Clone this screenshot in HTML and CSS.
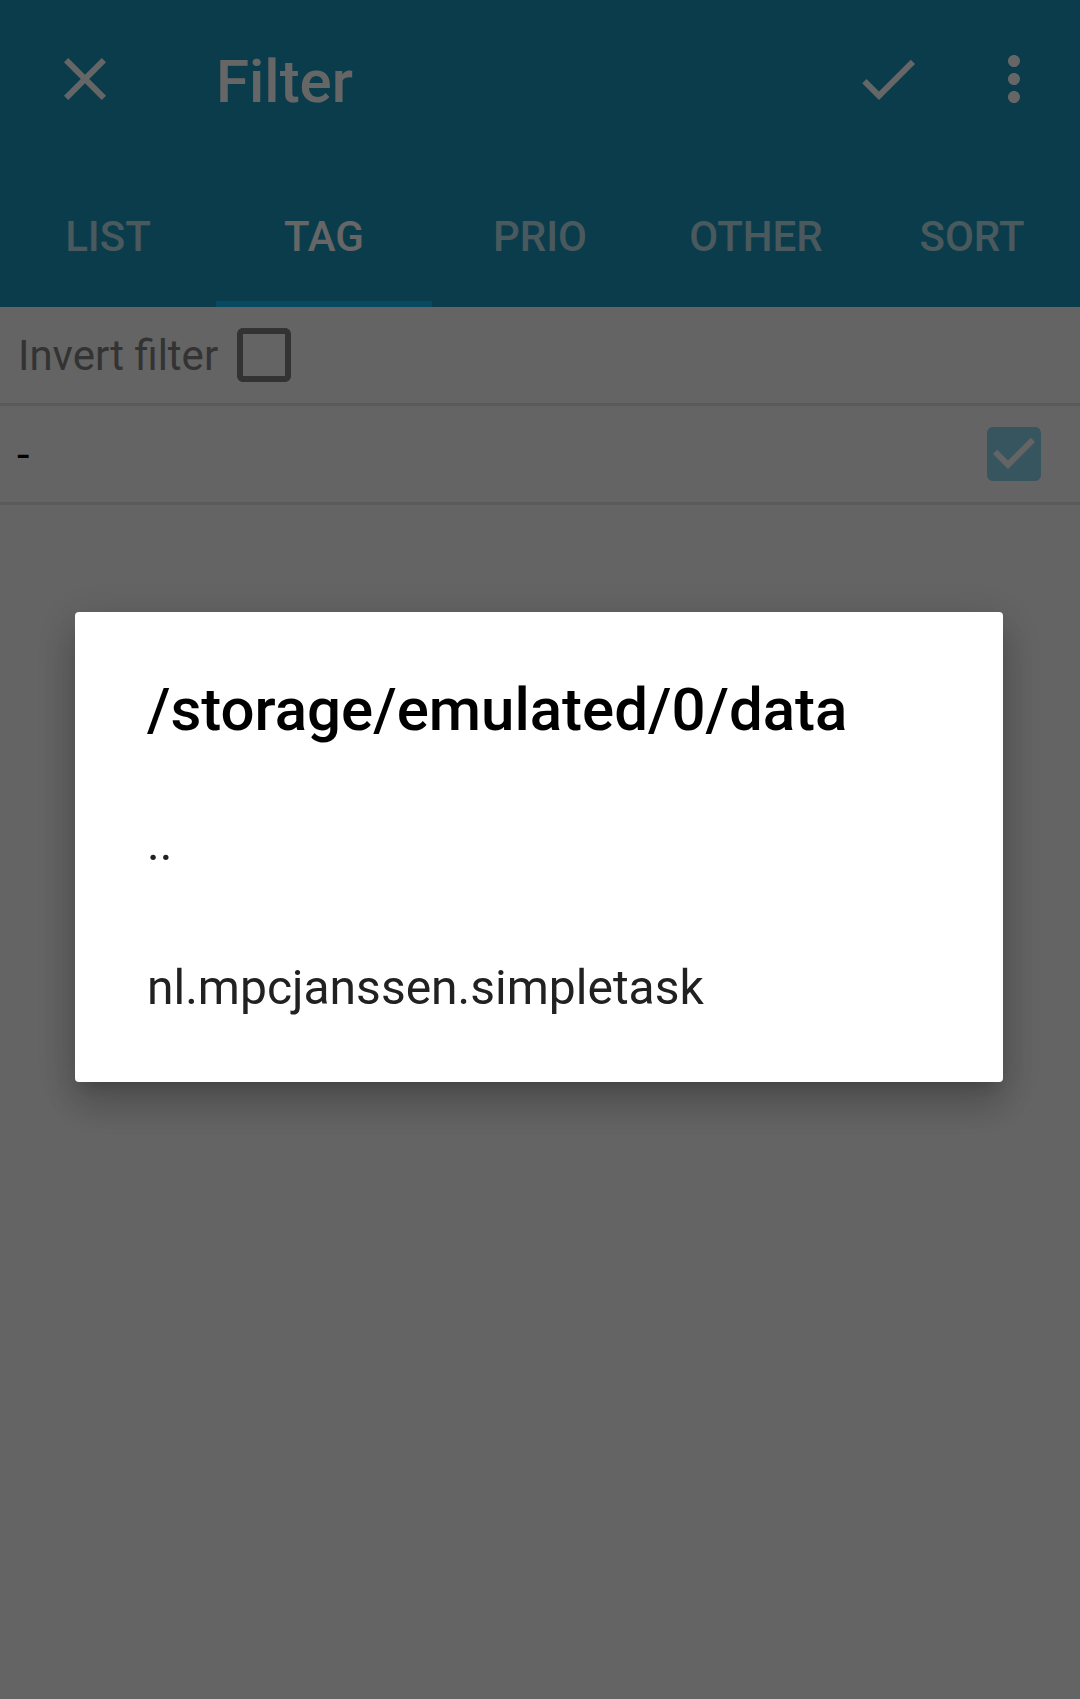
FILE: index.html
```html
<!DOCTYPE html>
<html lang="en">
<head>
<meta charset="utf-8">
<title>Filter</title>
<link rel="stylesheet" href="styles.css">
</head>
<body>
<div class="app">
  <header class="appbar">
    <div class="toolbar">
      <svg class="icon icon-close" viewBox="0 0 24 24"><path d="M19 6.41L17.59 5 12 10.59 6.41 5 5 6.41 10.59 12 5 17.59 6.41 19 12 13.41 17.59 19 19 17.59 13.41 12z"/></svg>
      <h1 class="title">Filter</h1>
      <div class="spacer"></div>
      <svg class="icon icon-check" viewBox="0 0 24 24"><path d="M9 16.17L4.83 12l-1.42 1.41L9 19 21 7l-1.41-1.41z"/></svg>
      <svg class="icon icon-more" viewBox="0 0 24 24"><path d="M12 8c1.1 0 2-.9 2-2s-.9-2-2-2-2 .9-2 2 .9 2 2 2zm0 2c-1.1 0-2 .9-2 2s.9 2 2 2 2-.9 2-2-.9-2-2-2zm0 6c-1.1 0-2 .9-2 2s.9 2 2 2 2-.9 2-2-.9-2-2-2z"/></svg>
    </div>
    <nav class="tabs">
      <div class="tab">List</div>
      <div class="tab active">Tag</div>
      <div class="tab">Prio</div>
      <div class="tab">Other</div>
      <div class="tab">Sort</div>
    </nav>
  </header>
  <main class="content">
    <div class="row invert-row">
      <span class="label">Invert filter</span>
      <svg class="cb cb-off" viewBox="0 0 24 24"><path d="M19 5v14H5V5h14m0-2H5c-1.1 0-2 .9-2 2v14c0 1.1.9 2 2 2h14c1.1 0 2-.9 2-2V5c0-1.1-.9-2-2-2z"/></svg>
    </div>
    <div class="row tag-row">
      <span class="dash">-</span>
      <svg class="cb cb-on" viewBox="0 0 24 24"><path d="M19 3H5c-1.11 0-2 .9-2 2v14c0 1.1.89 2 2 2h14c1.11 0 2-.9 2-2V5c0-1.1-.89-2-2-2zm-9 14l-5-5 1.41-1.41L10 14.17l7.59-7.59L19 8l-9 9z"/></svg>
    </div>
  </main>
</div>
<div class="scrim">
  <div class="dialog">
    <h2 class="dialog-title">/storage/emulated/0/data</h2>
    <ul class="file-list">
      <li class="file">..</li>
      <li class="file">nl.mpcjanssen.simpletask</li>
    </ul>
  </div>
</div>
</body>
</html>
```

FILE: styles.css
```css
html, body {
  margin: 0;
  padding: 0;
}
body {
  width: 1080px;
  height: 1699px;
  background: #fafafa;
  font-family: Roboto, "Noto Sans", "Liberation Sans", sans-serif;
  overflow: hidden;
}
.app {
  display: flex;
  flex-direction: column;
}
.appbar {
  background: #1b96bb;
  color: #fff;
}
.toolbar {
  height: 163px;
  box-sizing: border-box;
  display: flex;
  align-items: flex-start;
  padding: 43px 30px 0 49px;
}
.icon {
  width: 72px;
  height: 72px;
  fill: #fff;
  flex: none;
}
.title {
  margin: 3px 0 0 95px;
  font-size: 60px;
  line-height: 72px;
  font-weight: 500;
}
.spacer {
  flex: 1;
}
.icon-check {
  margin-right: 54px;
}
.tabs {
  display: grid;
  grid-template-columns: repeat(5, 1fr);
  height: 144px;
}
.tab {
  display: flex;
  align-items: center;
  justify-content: center;
  padding-top: 3px;
  box-sizing: border-box;
  font-size: 42px;
  font-weight: 500;
  text-transform: uppercase;
  color: rgba(255, 255, 255, 0.7);
}
.tab.active {
  color: #fff;
  border-bottom: 6px solid #0fb9f5;
  padding-top: 9px;
}
.content {
  display: flex;
  flex-direction: column;
}
.row {
  height: 99px;
  box-sizing: border-box;
  border-bottom: 3px solid #e1e1e1;
  display: flex;
  align-items: center;
  padding: 0 30px 0 18px;
}
.label {
  font-size: 42px;
  color: #808080;
}
.cb {
  width: 72px;
  height: 72px;
  flex: none;
}
.cb-off {
  fill: #808080;
  margin-left: 10px;
}
.dash {
  flex: 1;
  font-size: 45px;
  color: #000;
  margin-left: -1px;
}
.cb-on {
  fill: #89d4ed;
}
.scrim {
  position: fixed;
  inset: 0;
  background: rgba(0, 0, 0, 0.6);
  display: flex;
  align-items: flex-start;
  justify-content: flex-start;
  padding: 612px 0 0 75px;
}
.dialog {
  width: 928px;
  box-sizing: border-box;
  background: #fff;
  border-radius: 4px;
  padding: 62px 72px 23px 72px;
  box-shadow: 0 24px 38px 3px rgba(0, 0, 0, 0.14), 0 9px 46px 8px rgba(0, 0, 0, 0.12), 0 11px 15px -7px rgba(0, 0, 0, 0.2);
}
.dialog-title {
  margin: 0;
  font-size: 60px;
  line-height: 72px;
  font-weight: 500;
  color: #000;
}
.file-list {
  list-style: none;
  margin: 25px 0 0 0;
  padding: 0;
}
.file {
  height: 144px;
  display: flex;
  align-items: center;
  font-size: 48px;
  color: #212121;
}
```
